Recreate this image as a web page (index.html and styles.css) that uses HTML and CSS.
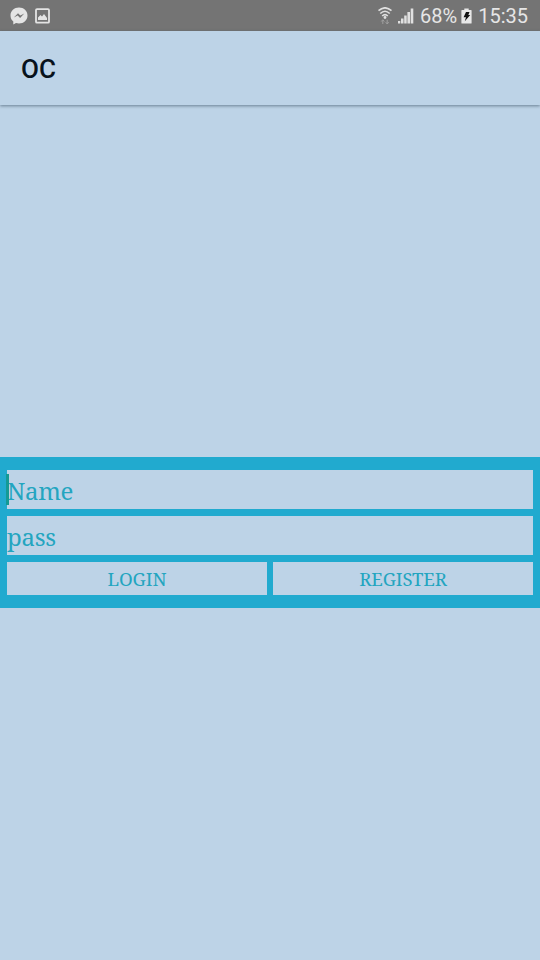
FILE: index.html
```html
<!DOCTYPE html>
<html lang="en">
<head>
<meta charset="utf-8">
<title>OC</title>
<link rel="stylesheet" href="styles.css">
</head>
<body>
<div class="status">
  <svg class="messenger" width="18" height="18" viewBox="0 0 18 18"><path fill="#e4e4e4" d="M9 .5C4.200.5.5 4 .5 8.400c0 2.500 1 4.500 2.800 6V17.500L6 16c1 .3 2 .4 3 .4 4.800 0 8.500-3.500 8.500-8S13.800.5 9 .5z"/><path fill="#747474" d="M3.800 10.600 8 6.200l2.300 2.300 4-2.100-4.200 4.500-2.400-2.300z"/></svg>
  <svg class="picture" width="15" height="16" viewBox="0 0 15 16"><rect x="1" y="1.200" width="13" height="13.500" rx="1" fill="none" stroke="#e4e4e4" stroke-width="1.800"/><path fill="#e4e4e4" d="M3 12V9.500L5.500 7l1.500 1.500L9 6l3 4v2z"/></svg>
  <span class="spacer"></span>
  <svg class="wifi" width="14" height="18" viewBox="0 0 14 18"><g fill="none" stroke="#e0e0e0" stroke-width="1.600"><path d="M.5 3.600Q7-2 13.500 3.600"/><path d="M2.300 6.500Q7 2 11.700 6.500"/><path d="M4.200 9Q7 6.300 9.800 9"/></g><circle cx="7" cy="10.500" r="1.400" fill="#e0e0e0"/><path d="M4.800 17v-4M3.300 14.500l1.500-1.800 1.500 1.800M9.200 12.700v4M7.700 15.200l1.500 1.800 1.500-1.800" fill="none" stroke="#a0a0a0"/></svg>
  <svg class="signal" width="16" height="16" viewBox="0 0 16 16"><path fill="#e0e0e0" d="M0 13h2.300v2.500H0zM3 10.500h2.500v5H3zM6.200 7.500h2.500v8H6.200zM9.400 4h2.600v11.500H9.400zM12.700.5h2.600v15h-2.600z"/></svg>
  <span class="percent">68%</span>
  <svg class="battery" width="11" height="16" viewBox="0 0 11 16"><path fill="#e8e8e8" d="M3.300.5h4.400V2H10q.6 0 .6.600v12.300q0 .6-.6.600H1q-.6 0-.6-.6V2.600Q.4 2 1 2h2.300z"/><path fill="#111" d="M5 4h3.500L7.300 7h1.900l-5.400 6.200L5 9.300H2.600z"/></svg>
  <span class="clock">15:35</span>
</div>
<header class="appbar"><h1>OC</h1></header>
<main>
  <form class="panel">
    <div class="field focused">Name</div>
    <div class="field">pass</div>
    <div class="actions">
      <button type="button" class="login">LOGIN</button>
      <button type="button" class="register">REGISTER</button>
    </div>
  </form>
</main>
</body>
</html>
```
FILE: styles.css
```css
* { box-sizing: border-box; }
body {
  margin: 0;
  height: 960px;
  display: flex;
  flex-direction: column;
  overflow: hidden;
  background: #bdd3e7;
  font-family: Roboto, sans-serif;
}
.status {
  flex: none;
  height: 31px;
  padding: 0 12px 0 9.500px;
  display: flex;
  align-items: center;
  background: #747474;
  color: #e6e6e6;
  font-size: 20px;
}
.status svg { flex: none; }
.picture { margin-left: 7.500px; }
.spacer { flex: 1; }
.signal { margin-left: 6px; }
.percent { margin-left: 6px; padding-top: 1px; }
.battery { margin-left: 4px; }
.clock { margin-left: 6px; padding-top: 1px; }
.appbar {
  flex: none;
  height: 74px;
  padding-left: 21px;
  display: flex;
  align-items: center;
  background: #bdd3e7;
  box-shadow: 0 1px 3px rgba(50, 70, 90, .6);
}
h1 {
  margin: 2px 0 0;
  font-size: 26px;
  font-weight: 500;
  color: #08121c;
}
main { padding-top: 352px; }
.panel {
  height: 151px;
  padding: 13px 7px;
  display: flex;
  flex-direction: column;
  gap: 7px;
  background: #21aacf;
  color: #23a5c0;
  font-family: "Noto Serif", "DejaVu Serif Condensed", "DejaVu Serif", serif;
}
.field {
  height: 39px;
  display: flex;
  align-items: center;
  padding-top: 1px;
  position: relative;
  background: #bdd3e7;
  font-size: 24px;
  letter-spacing: -.3px;
}
.focused::before {
  content: "";
  position: absolute;
  left: -1px;
  top: 4px;
  width: 3px;
  height: 31px;
  background: #149a94;
}
.actions {
  height: 33px;
  display: grid;
  grid-template-columns: 1fr 1fr;
  gap: 6px;
}
button {
  border: 0;
  padding: 0;
  background: #bdd3e7;
  color: inherit;
  font-family: inherit;
  font-size: 18.500px;
  letter-spacing: -.1px;
}
```
